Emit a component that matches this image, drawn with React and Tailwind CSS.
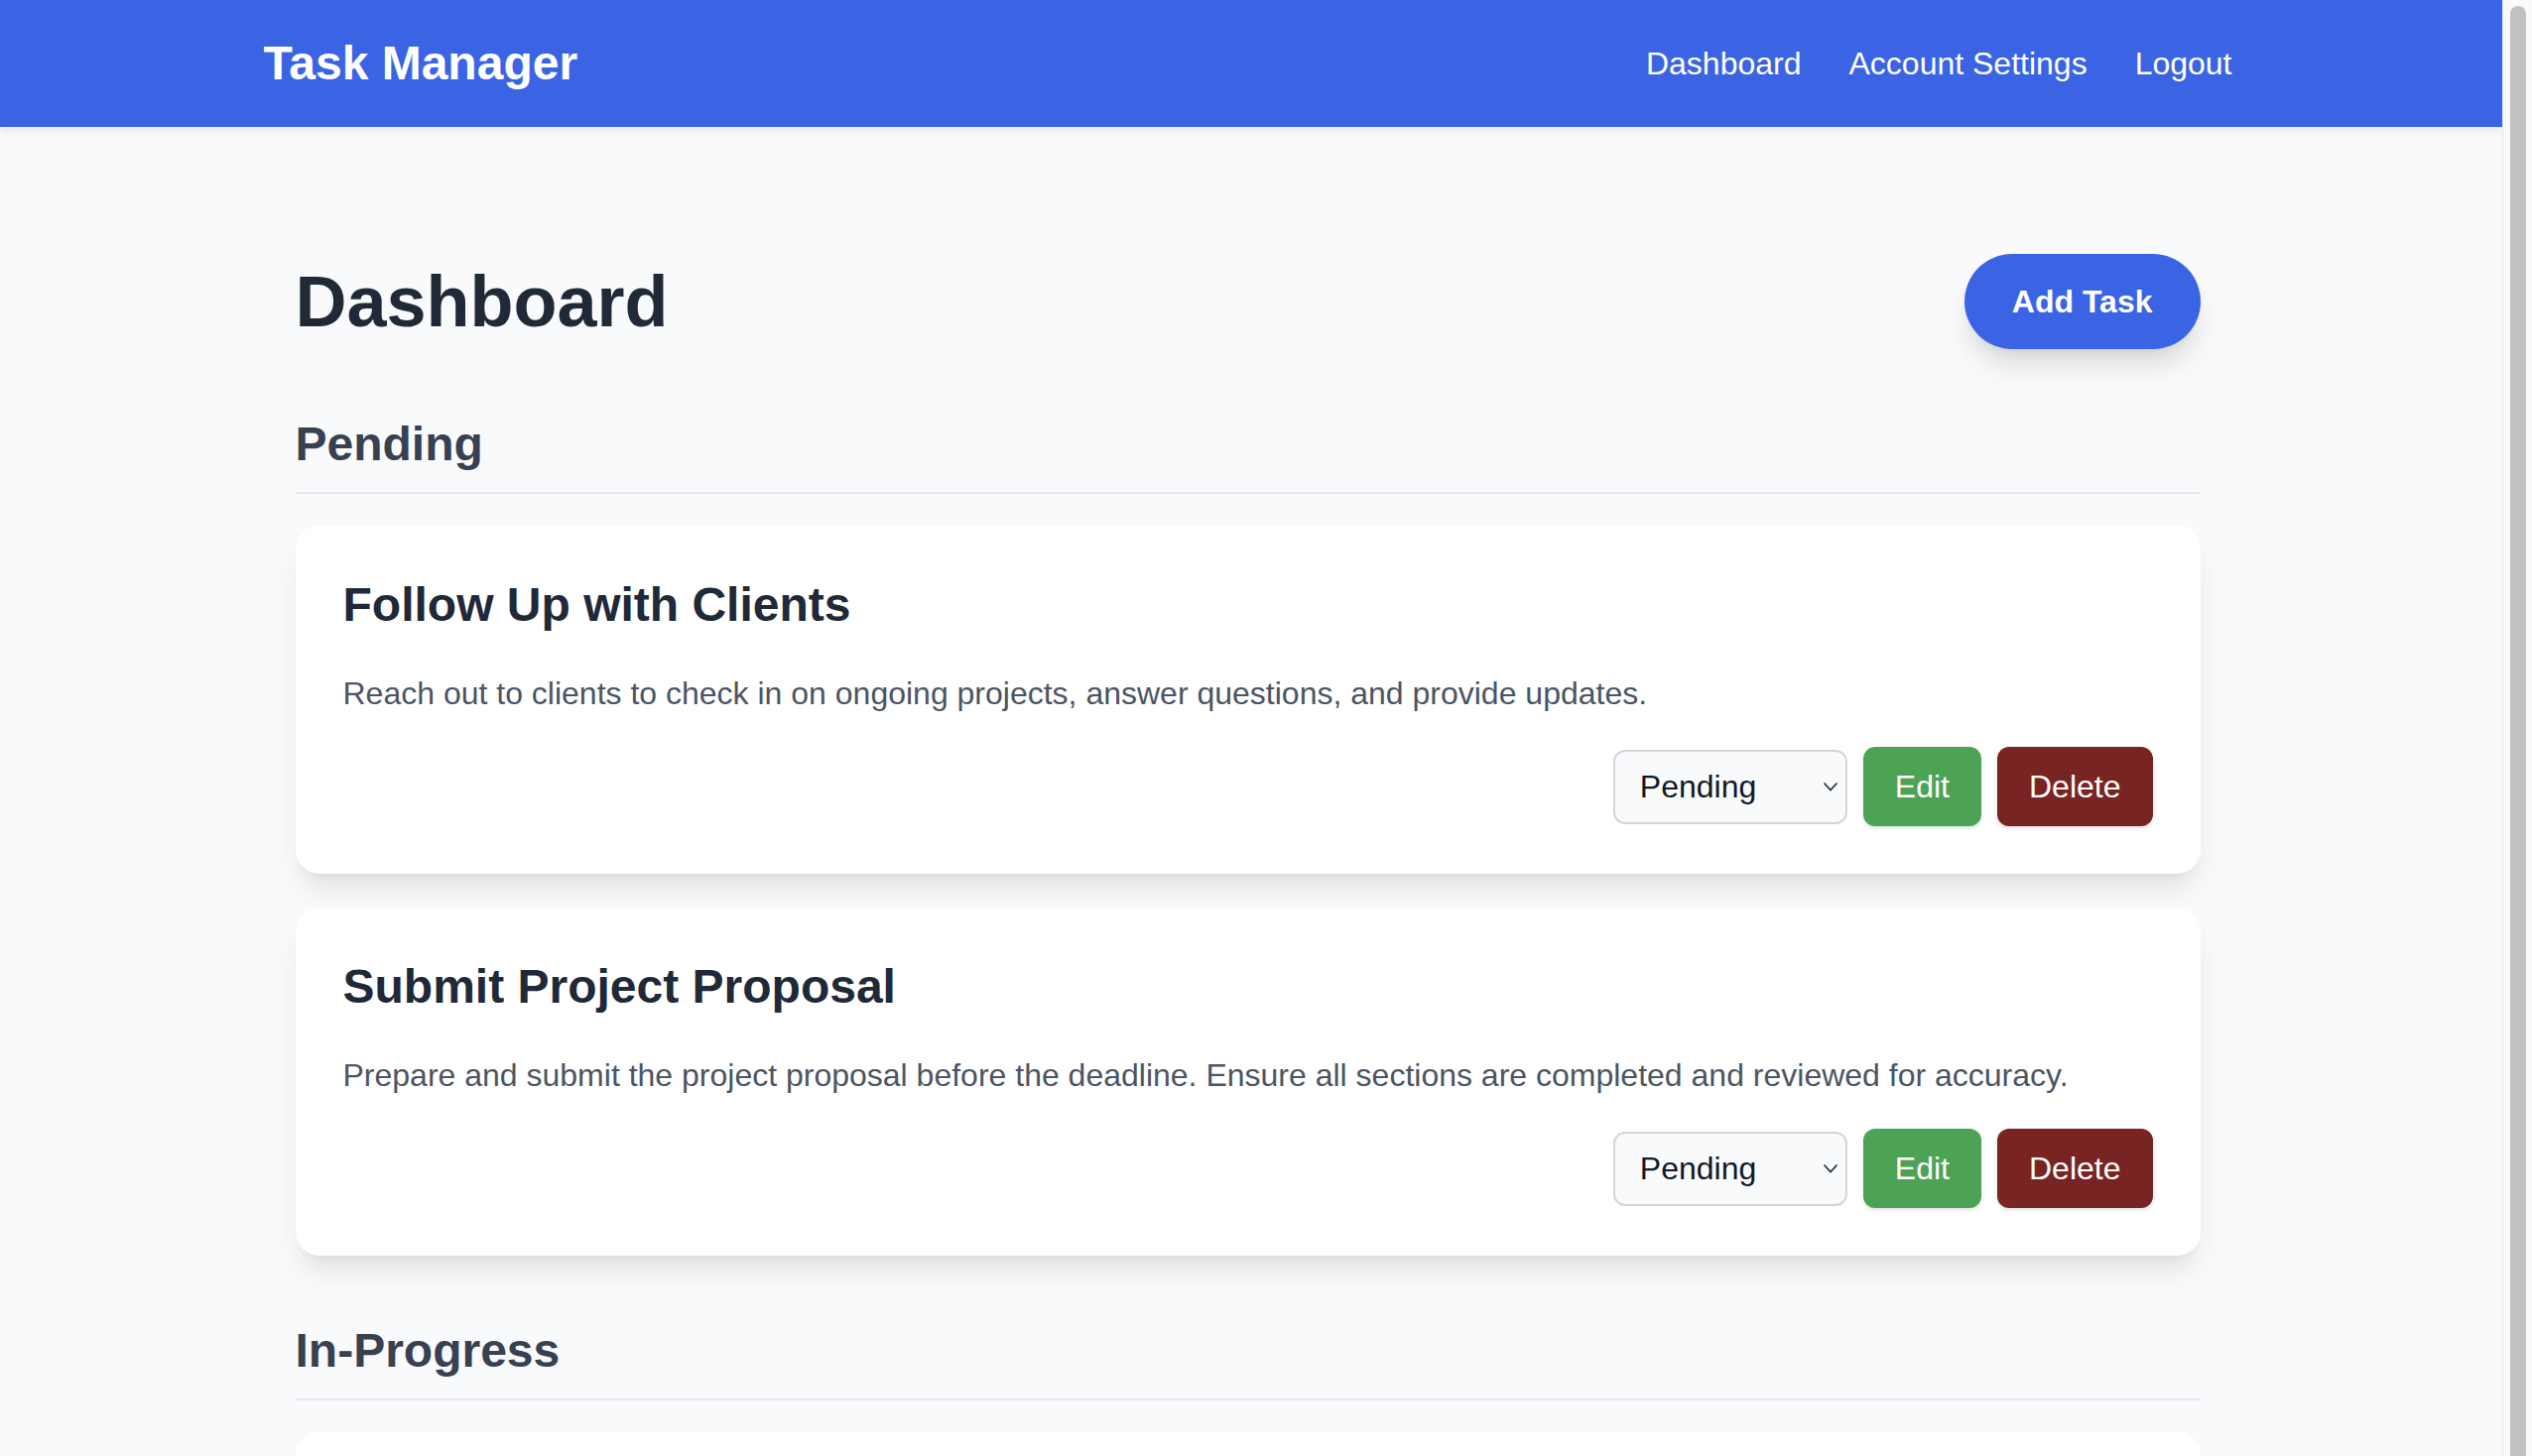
import { useState } from "react";

const sections = [
    {
        name: "Pending",
        tasks: [
            {
                id: 1,
                title: "Follow Up with Clients",
                description: "Reach out to clients to check in on ongoing projects, answer questions, and provide updates.",
                status: "Pending",
            },
            {
                id: 2,
                title: "Submit Project Proposal",
                description: "Prepare and submit the project proposal before the deadline. Ensure all sections are completed and reviewed for accuracy.",
                status: "Pending",
            },
        ],
    },
    {
        name: "In-Progress",
        tasks: [
            {
                id: 3,
                title: "Update Website Content",
                description: "Revise the homepage copy and refresh the product screenshots.",
                status: "In-Progress",
            },
        ],
    },
];

const TaskCard = ({ task }) => {
    const [status, setStatus] = useState(task.status);

    return (
        <div className="bg-white rounded-[24px] p-[48px] shadow-[0_20px_30px_-6px_rgba(0,0,0,0.1),0_8px_12px_-8px_rgba(0,0,0,0.08)]">
            <h3 className="text-[48px] leading-[64px] font-bold text-[#1f2937] mb-[33px]">
                {task.title}
            </h3>
            <p className="text-[32px] leading-[48px] text-[#4b5563] mb-[30px]">
                {task.description}
            </p>
            <div className="flex justify-end items-center gap-[16px]">
                <div className="relative">
                    <select
                        value={status}
                        onChange={(e) => setStatus(e.target.value)}
                        className="appearance-none w-[236px] h-[75px] pl-[25px] pr-[40px] text-[32px] text-[#111827] bg-[#f9fafb] border-2 border-[#d1d5db] rounded-[12px] outline-none"
                    >
                        <option>Pending</option>
                        <option>In-Progress</option>
                        <option>Completed</option>
                    </select>
                    <svg
                        className="absolute right-[9px] top-1/2 -translate-y-1/2 pointer-events-none"
                        width="16"
                        height="10"
                        viewBox="0 0 16 10"
                        fill="none"
                    >
                        <path d="M1.5 1.5 L8 8.5 L14.5 1.5" stroke="#1f2937" strokeWidth="1.6" />
                    </svg>
                </div>
                <button className="h-[80px] px-[32px] text-[32px] leading-[48px] text-white bg-[#4ca255] rounded-[12px] shadow-[0_2px_4px_rgba(0,0,0,0.12)]">
                    Edit
                </button>
                <button className="h-[80px] px-[32px] text-[32px] leading-[48px] text-white bg-[#782422] rounded-[12px] shadow-[0_2px_4px_rgba(0,0,0,0.12)]">
                    Delete
                </button>
            </div>
        </div>
    );
};

const App = () => {
    return (
        <div
            className="h-[1468px] flex overflow-hidden bg-[#f9fafb]"
            style={{ fontFamily: '"Liberation Sans", Arial, sans-serif' }}
        >
            <div className="flex-1 min-w-0">
                <header className="h-[128px] pr-[7px] bg-[#3a64e4] shadow-[0_4px_8px_rgba(0,0,0,0.08)]">
                    <div className="max-w-[2048px] h-full mx-auto px-[32px] flex justify-between items-center">
                        <h1 className="text-[48px] leading-[64px] font-bold text-white">Task Manager</h1>
                        <nav className="flex items-center gap-[48px] text-[32px] leading-[48px] text-white">
                            <a href="#">Dashboard</a>
                            <a href="#">Account Settings</a>
                            <a href="#">Logout</a>
                        </nav>
                    </div>
                </header>

                <div className="pr-[7px]">
                    <main className="max-w-[1920px] mx-auto pt-[128px]">
                        <div className="flex justify-between items-center mb-[64px]">
                            <h2 className="text-[72px] leading-[80px] font-bold text-[#1f2937]">Dashboard</h2>
                            <button className="h-[96px] px-[48px] rounded-full bg-[#3a64e4] text-white text-[32px] leading-[48px] font-bold shadow-[0_20px_30px_-6px_rgba(0,0,0,0.14),0_8px_12px_-8px_rgba(0,0,0,0.1)]">
                                Add Task
                            </button>
                        </div>

                        {sections.map((section) => (
                            <section key={section.name} className="mb-[64px]">
                                <h2 className="text-[48px] leading-[64px] font-bold text-[#374151] pb-[16px] border-b-2 border-[#e5e7eb] mb-[32px]">
                                    {section.name}
                                </h2>
                                <div className="flex flex-col gap-[34px]">
                                    {section.tasks.map((task) => (
                                        <TaskCard key={task.id} task={task} />
                                    ))}
                                </div>
                            </section>
                        ))}
                    </main>
                </div>
            </div>

            {/* scrollbar strip */}
            <div className="w-[30px] shrink-0 flex justify-center bg-[#fafafa] border-l border-[#e6e6e6] pt-[6px]">
                <div className="w-[16px] rounded-t-full bg-[#c1c1c1]" />
            </div>
        </div>
    );
};

export default App;
